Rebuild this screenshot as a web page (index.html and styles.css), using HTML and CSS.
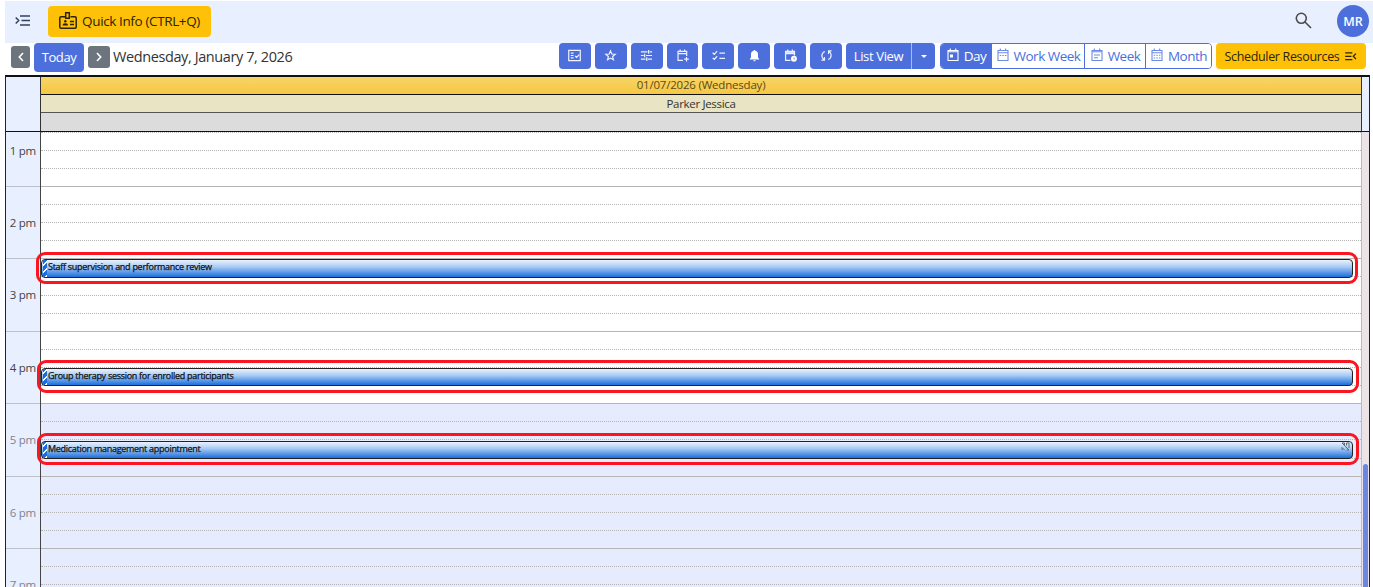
FILE: index.html
```html
<!DOCTYPE html>
<html lang="en">
<head>
    <meta charset="UTF-8">
    <meta name="viewport" content="width=device-width, initial-scale=1.0">
    <title>Scheduler</title>
    <link rel="stylesheet" href="styles.css">
</head>
<body>
    <!-- Top bar -->
    <div class="topbar">
        <svg class="menu-icon" width="16" height="12" viewBox="0 0 16 12" fill="none" stroke="#35405f" stroke-width="1.5"><path d="M5 1h10M6.500 5.500h8.500M5 10h10M.7 2.500 3.700 5.500.7 8.500"/></svg>
        <button class="btn-quick">
            <svg width="18" height="17" viewBox="0 0 18 17" fill="none" stroke="#2b2407" stroke-width="1.5"><path d="M6.5 4.7H2Q.8 4.7.8 6v9q0 1.200 1.200 1.200h14q1.200 0 1.200-1.200V6q0-1.300-1.200-1.300h-4.500"/><path d="M6.700.8h3.600v5.400H6.700z"/><path d="M11 9.500h4M11 12.500h4"/><circle cx="6.300" cy="9.300" r="1.200" fill="#2b2407" stroke="none"/><path d="M3.600 13.600q0-2.300 2.700-2.300t2.700 2.300z" fill="#2b2407" stroke="none"/></svg>
            <span>Quick Info (CTRL+Q)</span>
        </button>
        <svg class="search-icon" width="17" height="17" viewBox="0 0 17 17" fill="none" stroke="#4a4a4a" stroke-width="1.600"><circle cx="6.300" cy="6.300" r="5"/><path d="m10 10 6 6"/></svg>
        <div class="avatar">MR</div>
    </div>

    <!-- Scheduler toolbar -->
    <div class="toolbar">
        <button class="btn-nav prev"><svg width="8" height="12" viewBox="0 0 8 12" fill="none" stroke="#fff" stroke-width="1.600"><path d="M6 2 2.300 6 6 10"/></svg></button>
        <button class="btn-today"><span>Today</span></button>
        <button class="btn-nav next"><svg width="8" height="12" viewBox="0 0 8 12" fill="none" stroke="#fff" stroke-width="1.600"><path d="M2 2 5.700 6 2 10"/></svg></button>
        <span class="current-date">Wednesday, January 7, 2026</span>

        <div class="tools">
            <button class="btn-icon"><svg viewBox="0 0 14 14"><path d="M.8 1.500h12.400v11H.8zM3 4.500h3M3 7h3M3 9.500h3M7.700 7.500l1.600 1.600 2.700-3"/></svg></button>
            <button class="btn-icon"><svg viewBox="0 0 14 14"><path d="m7 2 1.400 3.400 3.700.3-2.800 2.400.9 3.600L7 9.800l-3.200 1.900.9-3.600-2.800-2.400 3.700-.3z"/></svg></button>
            <button class="btn-icon"><svg viewBox="0 0 14 14"><path d="M1 3h7M10.500 3H13M9.300 1v4M1 7h3M6.500 7H13M5 5v4M1 11h5M8.500 11H13M7.300 9v4"/></svg></button>
            <button class="btn-icon"><svg viewBox="0 0 14 14"><path d="M7.500 12.300H2.200V2.500h9.300v5M2.200 5h9.300M4.500.5v2M9.300.5v2M11.300 8.500v5M8.800 11h5"/></svg></button>
            <button class="btn-icon"><svg viewBox="0 0 14 14"><path d="m.7 4 1.800 1.700 3-3.400M.7 9.500l1.800 1.700 3-3.400M8 4.500h6M8 10h6"/></svg></button>
            <button class="btn-icon"><svg viewBox="0 0 14 14"><path class="solid" d="M7 1q.9 0 .9 1 2.900.8 2.900 4v3.300L12 10.600v.7H2v-.7l1.200-1.300V6q0-3.200 2.900-4 0-1 .9-1zM5.700 12h2.600q-.2 1.300-1.300 1.300T5.700 12z"/></svg></button>
            <button class="btn-icon"><svg viewBox="0 0 14 14"><path d="M7 12.300H1.700V2.500h9.600V7M1.700 5h9.600M4 .5v2M9 .5v2"/><path d="M1.700 3.500h9.600"/><circle class="solid" cx="10.700" cy="10.500" r="3.200"/><path d="M10.700 9v1.700h1.200" stroke="#4c6fdc" stroke-width=".6"/></svg></button>
            <button class="btn-icon"><svg viewBox="0 0 14 14"><path d="M5.200 2.700Q2 4 2 7.300q0 2.700 2.500 4.200M1.500 12h3.300V8.700M8.800 11.300Q12 10 12 6.700q0-2.700-2.500-4.200M12.500 2H9.200v3.300"/></svg></button>
        </div>

        <div class="split">
            <button class="btn-list">List View</button>
            <button class="btn-caret"><i></i></button>
        </div>

        <div class="views">
            <button class="view day active"><svg viewBox="0 0 12 14"><path d="M1 2.500h10v10H1zM1 3.700h10M3.300.5v2M8.700.5v2"/><path class="solid" d="M3 6.500h3v3H3z"/></svg>Day</button>
            <button class="view work"><svg viewBox="0 0 12 14"><path d="M1 2.500h10v10H1zM1 4.700h10M3.300.5v2M8.700.5v2"/><path d="M2.700 7.500h1.500M5.300 7.500h1.500M7.900 7.500h1.500"/></svg>Work Week</button>
            <button class="view week"><svg viewBox="0 0 12 14"><path d="M1 2.500h10v10H1zM1 3.700h10M3.300.5v2M8.700.5v2M3 7h6M3 9.700h4"/></svg>Week</button>
            <button class="view month"><svg viewBox="0 0 12 14"><path d="M1 2.500h10v10H1zM1 4.700h10M3.300.5v2M8.700.5v2"/><path d="M2.700 7.300h1.500M5.300 7.300h1.500M7.900 7.300h1.500M2.700 10h1.500M5.300 10h1.500M7.900 10h1.500"/></svg>Month</button>
        </div>

        <button class="btn-resources">
            <span>Scheduler Resources</span>
            <svg width="12" height="9" viewBox="0 0 13 10" fill="none" stroke="#2b2407" stroke-width="1.400"><path d="M0 1h8M0 4.800h7M0 8.600h8M12 1.800 9 4.800l3 3"/></svg>
        </button>
    </div>

    <!-- Calendar -->
    <div class="scheduler">
        <div class="sched-header">
            <div class="corner"></div>
            <div class="head-cells">
                <div class="head-date">01/07/2026 (Wednesday)</div>
                <div class="head-person">Parker Jessica</div>
                <div class="head-allday"></div>
            </div>
            <div class="head-end"></div>
        </div>
        <div class="sched-body">
            <div class="times">
                <div class="time">1 pm</div>
                <div class="time">2 pm</div>
                <div class="time">3 pm</div>
                <div class="time">4 pm</div>
                <div class="time off">5 pm</div>
                <div class="time off">6 pm</div>
                <div class="time off">7 pm</div>
            </div>
            <div class="slots">
                <div class="hour"><i></i><i></i><i></i><i></i></div>
                <div class="hour"><i></i><i></i><i></i><i></i></div>
                <div class="hour"><i></i><i></i><i></i><i></i></div>
                <div class="hour"><i></i><i></i><i></i><i></i></div>
                <div class="hour off"><i></i><i></i><i></i><i></i></div>
                <div class="hour off"><i></i><i></i><i></i><i></i></div>
                <div class="hour off"><i></i><i></i><i></i><i></i></div>
            </div>
            <div class="scroll"><div class="thumb"></div></div>

            <div class="event supervision"><span>Staff supervision and performance review</span></div>
            <div class="event therapy"><span>Group therapy session for enrolled participants</span></div>
            <div class="event medication">
                <span>Medication management appointment</span>
                <svg class="recur" width="9" height="9" viewBox="0 0 9 9" fill="none" stroke="#5f6b78" stroke-width="1"><path d="M1 1h2.500v2.500M1 8V5.500M1 1l7 7H5.500M8 1v5M5.500 3.500V1H8M1 5.500 3.500 8"/></svg>
            </div>
            <div class="outline one"></div>
            <div class="outline two"></div>
            <div class="outline three"></div>
        </div>
    </div>
</body>
</html>
```

FILE: styles.css
```css
* { margin: 0; padding: 0; box-sizing: border-box; }
body { width: 1373px; height: 587px; overflow: hidden; background: #fff; font-family: "Open Sans", "Noto Sans", sans-serif; color: #333; }
button { border: none; font-family: inherit; cursor: pointer; white-space: nowrap; display: flex; align-items: center; justify-content: center; }
svg { flex: none; }

/* Top bar */
.topbar { height: 42px; margin: 1px 0 0 5px; padding-left: 10px; background: #e8effe; display: flex; align-items: center; }
.menu-icon { margin-top: -2px; }
.btn-quick { width: 163px; height: 31px; margin: -1px auto 0 17px; gap: 5px; background: #ffc107; border-radius: 4px; color: #2b2407; font-size: 13.5px; letter-spacing: -0.38px; }
.btn-quick svg { margin-top: -3px; }
.btn-quick span { margin-top: -2px; }
.search-icon { margin-right: 25px; margin-top: -3px; }
.avatar { width: 32px; height: 32px; margin: -2px 4px 0 0; border-radius: 50%; background: #4c6fdc; color: #fff; font-size: 12.5px; font-weight: 600; display: flex; align-items: center; justify-content: center; }

/* Toolbar */
.toolbar { height: 32px; padding: 0 7px 0 11px; display: flex; align-items: flex-start; }
.btn-nav { height: 22px; margin-top: 3px; background: #6c757d; border-radius: 3px; }
.prev { width: 19px; }
.next { width: 22px; }
.btn-today { width: 50px; height: 29px; margin: 0 4px; background: #4c6fdc; border-radius: 4px; color: #fff; font-size: 13px; letter-spacing: -0.4px; }
.btn-today span { margin-top: -1px; }
.current-date { margin-left: 3px; font-size: 14.5px; line-height: 28px; letter-spacing: -0.4px; white-space: nowrap; }
.tools { display: flex; gap: 4px; margin-left: auto; margin-right: 4px; }
.btn-icon { width: 31.9px; height: 26px; background: #4c6fdc; border-radius: 4px; }
.btn-icon svg { width: 13px; height: 13px; margin-top: -1px; fill: none; stroke: #eef2ff; stroke-width: 1.3; }
svg .solid { fill: #fff; stroke: none; }
.split { display: flex; margin-right: 5px; color: #fff; }
.btn-list, .btn-caret { height: 26px; background: #4c6fdc; color: #fff; font-size: 13px; letter-spacing: -0.35px; }
.btn-list { width: 65px; border-radius: 4px 0 0 4px; }
.btn-caret { width: 24px; border-left: 1px solid #a9bbf0; border-radius: 0 4px 4px 0; }
.btn-caret i { border: 3px solid transparent; border-top-color: #fff; border-bottom: none; }
.views { display: flex; width: 272px; height: 26px; margin-right: 4px; border: 1px solid #4c6fdc; border-radius: 4px; overflow: hidden; }
.view { background: #fff; color: #4c6fdc; gap: 5px; padding-left: 1px; border-right: 1px solid #4c6fdc; font-size: 13.5px; letter-spacing: -0.5px; }
.view:last-child { border-right: none; }
.view svg { width: 12px; height: 14px; margin-top: -2px; fill: none; stroke: #6d8ae3; stroke-width: 1.1; }
.view.active { background: #4c6fdc; color: #fff; }
.view.active svg { stroke: #fff; }
.day { width: 51px; }
.work { width: 93px; }
.week { width: 61px; }
.month { width: 65px; }
.btn-resources { width: 150px; height: 26px; gap: 6px; background: #ffc107; border-radius: 4px; color: #2b2407; font-size: 12.5px; letter-spacing: -0.34px; }

/* Calendar */
.scheduler { height: 512px; margin-left: 5px; width: 1365px; border: 1px solid #222; border-top: 2px solid #111; border-bottom: none; }
.sched-header { display: flex; height: 55px; border-bottom: 1px solid #111; }
.corner { width: 35px; background: #e8effe; border-right: 1px solid #333; }
.head-cells { width: 1321px; border-right: 1px solid #333; text-align: center; font-size: 11.5px; letter-spacing: -0.2px; }
.head-date { height: 18px; line-height: 16px; background: linear-gradient(#f8d467, #f5c842); border-bottom: 1px solid #111; color: #5c4a18; }
.head-person { height: 18px; line-height: 17px; background: #e9e4c3; border-bottom: 1px solid #555; letter-spacing: -0.32px; }
.head-allday { height: 18px; background: #dcdcdc; }
.head-end { flex: 1; background: #e8effe; }

.sched-body { position: relative; display: flex; height: 455px; overflow: hidden; }
.times { width: 35px; margin-top: -17.5px; background: #e8effe; border-right: 1px solid #444; }
.time { height: 72.45px; line-height: 71px; padding-right: 4px; text-align: right; border-bottom: 1px solid #bcc0ca; font-size: 11.5px; letter-spacing: -0.25px; color: #444; white-space: nowrap; }
.time.off { color: #7d8490; }
.slots { width: 1321px; margin-top: -17.5px; border-right: 1px solid #bbb; }
.hour { height: 72.45px; display: grid; grid-template-rows: repeat(4, 1fr); }
.hour i { border-bottom: 1px dotted #b5b5b5; }
.hour i:last-child { border-bottom: 1px solid #b5b5b5; }
.hour.off { background: #e6ecfe; }
.scroll { flex: 1; padding: 332px 1px 0; background: #ebe3e5; }
.thumb { height: 140px; border-radius: 3px 3px 0 0; background: #6b87e3; }

/* Appointments */
.event { position: absolute; left: 35px; width: 1312px; height: 19px; padding-left: 6px; display: flex; align-items: center; justify-content: space-between; border: 1px solid #222; border-radius: 4px; background: linear-gradient(#eaf2fd, #a9cbf4 40%, #1a6fdc); font-size: 9px; letter-spacing: -0.28px; color: #111; -webkit-text-stroke: 0.25px #111; }
.event::before { content: ""; position: absolute; left: 1px; top: 0; bottom: 0; width: 4px; background: repeating-linear-gradient(-45deg, #fff 0 2px, #1a6fdc 2px 5px); }
.event span { margin-top: -4px; }
.supervision { top: 127px; }
.therapy { top: 236px; height: 18px; }
.medication { top: 309px; height: 18px; }
.therapy span, .medication span { margin-top: -3px; }
.recur { margin: -7px 2px 0 0; }
.outline { position: absolute; left: 30px; width: 1322px; height: 32px; border: 3px solid #fb1520; border-radius: 9px; }
.one { top: 120px; }
.two { top: 228px; left: 31px; height: 33px; }
.three { top: 301px; left: 31px; height: 32px; }
```
